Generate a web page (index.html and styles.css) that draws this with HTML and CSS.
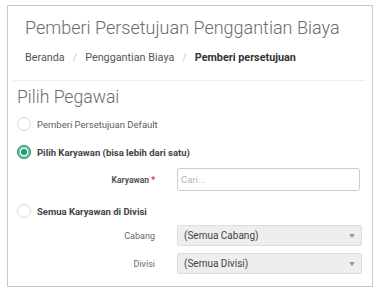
FILE: index.html
```html
<!DOCTYPE html>
<html lang="id">
<head>
    <meta charset="UTF-8">
    <meta name="viewport" content="width=device-width, initial-scale=1.0">
    <title>Pemberi Persetujuan Penggantian Biaya</title>
    <link rel="stylesheet" href="styles.css">
</head>
<body>
    <div class="panel">
        <div class="page-head">
            <h1 class="page-title">Pemberi Persetujuan Penggantian Biaya</h1>
            <ol class="breadcrumb">
                <li><a href="#">Beranda</a></li>
                <li class="sep">/</li>
                <li><a href="#">Penggantian Biaya</a></li>
                <li class="sep">/</li>
                <li class="active">Pemberi persetujuan</li>
            </ol>
        </div>

        <div class="content">
            <h2 class="section-title">Pilih Pegawai</h2>

            <label class="radio-row">
                <span class="radio"></span>
                <span class="radio-text">Pemberi Persetujuan Default</span>
            </label>

            <label class="radio-row row-karyawan">
                <span class="radio checked"></span>
                <span class="radio-text strong">Pilih Karyawan (bisa lebih dari satu)</span>
            </label>

            <div class="field field-input">
                <label class="field-label strong">Karyawan <span class="req">*</span></label>
                <input type="text" class="input" placeholder="Cari...">
            </div>

            <label class="radio-row row-divisi">
                <span class="radio"></span>
                <span class="radio-text strong">Semua Karyawan di Divisi</span>
            </label>

            <div class="field field-cabang">
                <label class="field-label">Cabang</label>
                <div class="select">(Semua Cabang)<span class="caret"></span></div>
            </div>

            <div class="field field-divisi">
                <label class="field-label">Divisi</label>
                <div class="select">(Semua Divisi)<span class="caret"></span></div>
            </div>
        </div>
    </div>
</body>
</html>
```

FILE: styles.css
```css
body {
    margin: 0;
    font-family: Roboto, "Liberation Sans", Arial, sans-serif;
    background: #fff;
    color: #333;
}
.panel {
    margin: 5px 14px 0 7px;
    height: 280px;
    border: 1px solid #c9c9c9;
    box-sizing: content-box;
}
.page-head {
    margin: 0 7px 0 5px;
    padding: 10px 0 12px 12px;
    border-bottom: 1px solid #eee;
}
.page-title {
    margin: 0;
    font-size: 18px;
    line-height: 24px;
    font-weight: 300;
    color: #6b6b6b;
}
.breadcrumb {
    list-style: none;
    margin: 8px 0 0;
    padding: 0;
    display: flex;
    font-size: 10.8px;
    line-height: 20px;
}
.breadcrumb a {
    color: #555;
    text-decoration: none;
}
.breadcrumb .sep {
    color: #ccc;
    padding: 0 8px;
}
.breadcrumb .active {
    font-weight: bold;
    color: #333;
}
.content {
    padding: 0 0 0 9px;
}
.section-title {
    margin: 4px 0 0;
    font-size: 17.6px;
    line-height: 24px;
    font-weight: 300;
    color: #6b6b6b;
}
.radio-row {
    display: flex;
    align-items: center;
    height: 20px;
    margin-top: 5px;
}
.row-karyawan {
    margin-top: 8px;
}
.row-divisi {
    margin-top: 10px;
}
.radio {
    width: 12px;
    height: 12px;
    border: 1px solid #d8d8d8;
    border-radius: 50%;
    background: #fff;
    margin-right: 6px;
    flex: none;
}
.radio.checked {
    border-color: #1c7f62;
    background: #1f9a74;
    box-shadow: inset 0 0 0 2px #7cc8b0, inset 0 0 0 3px #fff;
}
.radio-text {
    font-size: 9.5px;
    color: #606060;
}
.strong {
    font-weight: bold;
    color: #444;
}
.field {
    display: flex;
    align-items: center;
}
.field-input {
    margin-top: 6px;
}
.field-cabang {
    margin-top: 4px;
}
.field-divisi {
    margin-top: 7px;
}
.field-label {
    width: 138px;
    text-align: right;
    font-size: 9px;
    color: #676a6c;
    margin-right: 22px;
}
.field-input .field-label {
    font-size: 8.5px;
    color: #555;
}
.req {
    color: #e0303a;
}
.input {
    width: 183px;
    height: 23px;
    box-sizing: border-box;
    border: 1px solid #ccc;
    border-radius: 3px;
    padding: 0 3px;
    font-family: inherit;
    font-size: 9.5px;
    color: #333;
}
.input::placeholder {
    color: #b5b5b5;
}
.select {
    position: relative;
    width: 185px;
    height: 21px;
    box-sizing: border-box;
    background: #eee;
    border: 1px solid #ddd;
    border-radius: 2px;
    padding-left: 6px;
    font-size: 10px;
    line-height: 19px;
    color: #444;
}
.caret {
    position: absolute;
    right: 6px;
    top: 8px;
    border-left: 3px solid transparent;
    border-right: 3px solid transparent;
    border-top: 4px solid #999;
}
```
